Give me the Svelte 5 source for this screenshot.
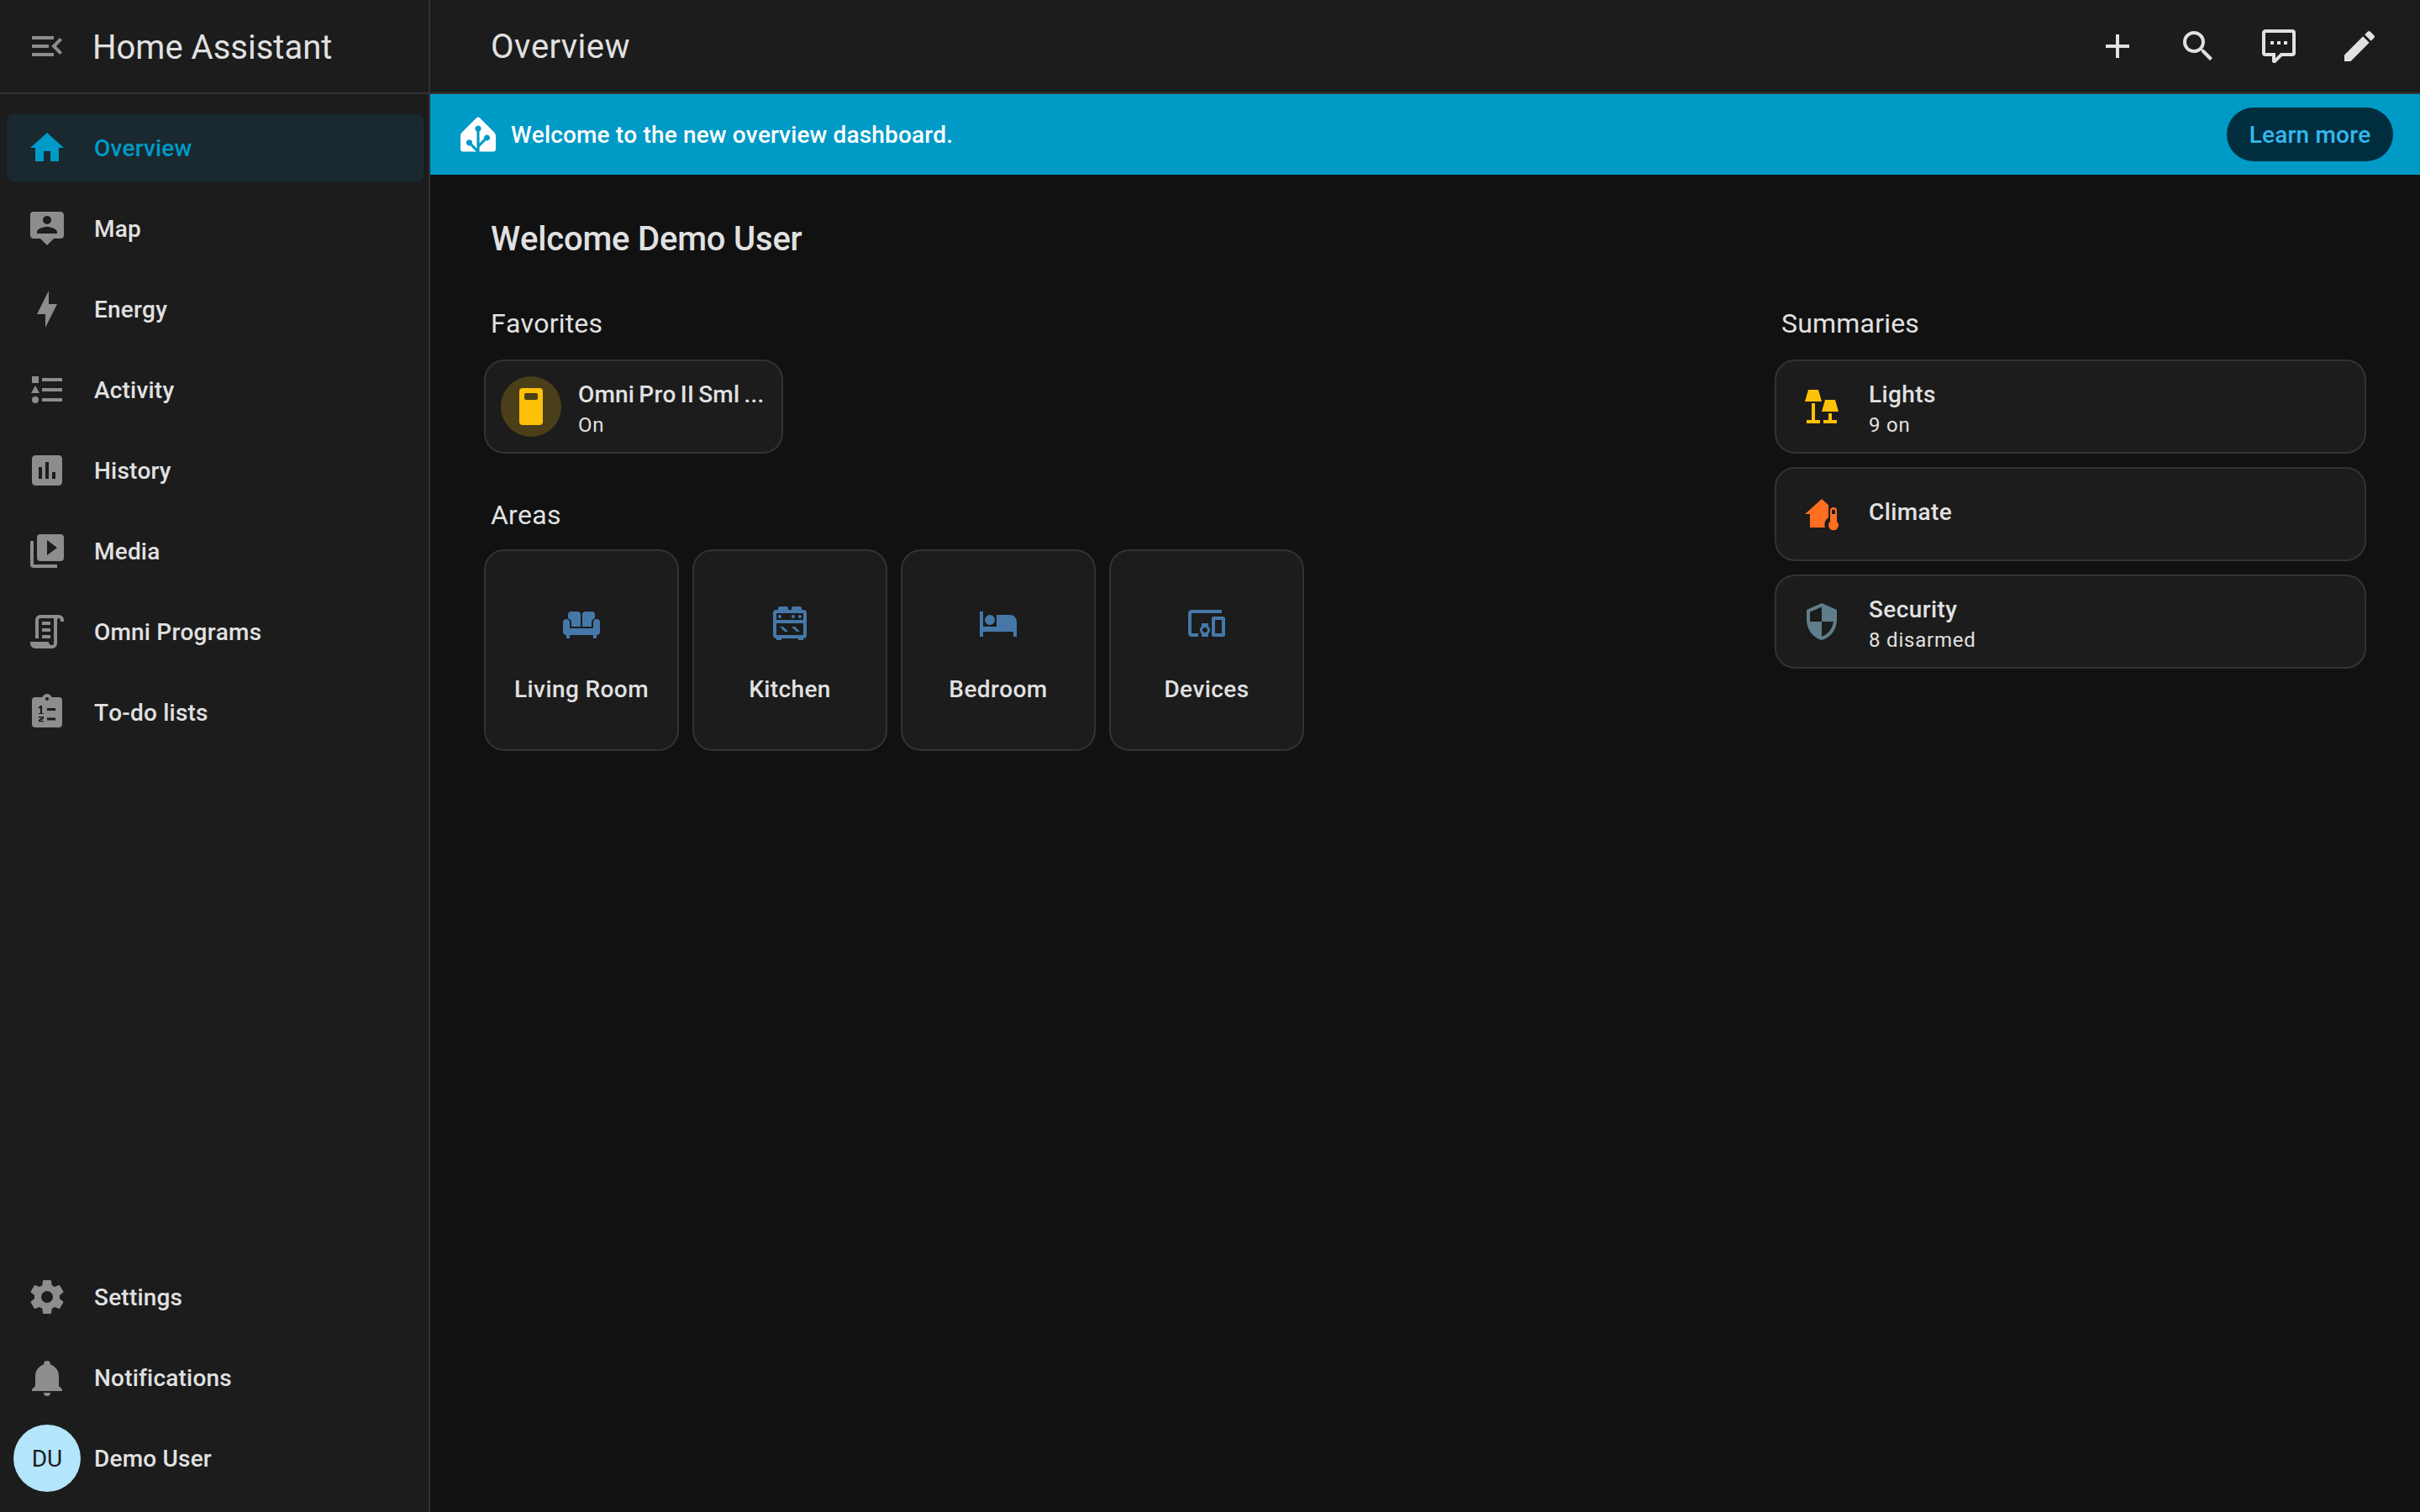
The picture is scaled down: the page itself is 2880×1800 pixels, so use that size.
<script>
	const icons = {
		menuOpen: 'M21,15.61L19.59,17L14.58,12L19.59,7L21,8.39L17.44,12L21,15.61M3,6H16V8H3V6M3,13V11H13V13H3M3,18V16H16V18H3Z',
		home: 'M10,20V14H14V20H19V12H22L12,3L2,12H5V20H10Z',
		map: 'M20,2H4A2,2 0 0,0 2,4V16A2,2 0 0,0 4,18H8L12,22L16,18H20A2,2 0 0,0 22,16V4C22,2.89 21.1,2 20,2M12,4.5A2.5,2.5 0 0,1 14.5,7A2.5,2.5 0 0,1 12,9.5A2.5,2.5 0 0,1 9.5,7A2.5,2.5 0 0,1 12,4.5M18,15H6V14.1C6,12.1 10,11 12,11C14,11 18,12.1 18,14.1V15Z',
		energy: 'M11 15H6L13 1V9H18L11 23V15Z',
		activity: 'M5,9.5L7.5,14H2.5L5,9.5M3,4H7V8H3V4M5,20A2,2 0 0,0 7,18A2,2 0 0,0 5,16A2,2 0 0,0 3,18A2,2 0 0,0 5,20M9,5V7H21V5H9M9,19H21V17H9V19M9,13H21V11H9V13Z',
		history: 'M19 3H5C3.9 3 3 3.9 3 5V19C3 20.1 3.9 21 5 21H19C20.1 21 21 20.1 21 19V5C21 3.9 20.1 3 19 3M9 17H7V10H9V17M13 17H11V7H13V17M17 17H15V13H17V17Z',
		media: 'M4,6H2V20A2,2 0 0,0 4,22H18V20H4V6M20,2H8A2,2 0 0,0 6,4V16A2,2 0 0,0 8,18H20A2,2 0 0,0 22,16V4A2,2 0 0,0 20,2M12,14.5V5.5L18,10L12,14.5Z',
		script: 'M15,20A1,1 0 0,0 16,19V4H8A1,1 0 0,0 7,5V16H5V5A3,3 0 0,1 8,2H19A3,3 0 0,1 22,5V6H20V5A1,1 0 0,0 19,4A1,1 0 0,0 18,5V9L18,19A3,3 0 0,1 15,22H5A3,3 0 0,1 2,19V18H13A2,2 0 0,0 15,20M9,6H14V8H9V6M9,10H14V12H9V10M9,14H14V16H9V14Z',
		todo: 'M19,3H14.82C14.4,1.84 13.3,1 12,1C10.7,1 9.6,1.84 9.18,3H5A2,2 0 0,0 3,5V19A2,2 0 0,0 5,21H19A2,2 0 0,0 21,19V5A2,2 0 0,0 19,3M12,3A1,1 0 0,1 13,4A1,1 0 0,1 12,5A1,1 0 0,1 11,4A1,1 0 0,1 12,3M12,9.5H17V11H12V9.5M12,15.2H17V16.8H12V15.2M6.8,9.2L8,8H9V12.5H10V13H7V12.5H8V9.3L7.2,9.9L6.8,9.2M7,14.5H10V15.8L8,17H10V17.6H7V16.5L9,15.2H7V14.5Z',
		settings: 'M12,15.5A3.5,3.5 0 0,1 8.5,12A3.5,3.5 0 0,1 12,8.5A3.5,3.5 0 0,1 15.5,12A3.5,3.5 0 0,1 12,15.5M19.43,12.97C19.47,12.65 19.5,12.33 19.5,12C19.5,11.67 19.47,11.34 19.43,11L21.54,9.37C21.73,9.22 21.78,8.95 21.66,8.73L19.66,5.27C19.54,5.05 19.27,4.96 19.05,5.05L16.56,6.05C16.04,5.66 15.5,5.32 14.87,5.07L14.5,2.42C14.46,2.18 14.25,2 14,2H10C9.75,2 9.54,2.18 9.5,2.42L9.13,5.07C8.5,5.32 7.96,5.66 7.44,6.05L4.95,5.05C4.73,4.96 4.46,5.05 4.34,5.27L2.34,8.73C2.21,8.95 2.27,9.22 2.46,9.37L4.57,11C4.53,11.34 4.5,11.67 4.5,12C4.5,12.33 4.53,12.65 4.57,12.97L2.46,14.63C2.27,14.78 2.21,15.05 2.34,15.27L4.34,18.73C4.46,18.95 4.73,19.03 4.95,18.95L7.44,17.94C7.96,18.34 8.5,18.68 9.13,18.93L9.5,21.58C9.54,21.82 9.75,22 10,22H14C14.25,22 14.46,21.82 14.5,21.58L14.87,18.93C15.5,18.67 16.04,18.34 16.56,17.94L19.05,18.95C19.27,19.03 19.54,18.95 19.66,18.73L21.66,15.27C21.78,15.05 21.73,14.78 21.54,14.63L19.43,12.97Z',
		bell: 'M21,19V20H3V19L5,17V11C5,7.9 7.03,5.17 10,4.29C10,4.19 10,4.1 10,4A2,2 0 0,1 12,2A2,2 0 0,1 14,4C14,4.1 14,4.19 14,4.29C16.97,5.17 19,7.9 19,11V17L21,19M14,21A2,2 0 0,1 12,23A2,2 0 0,1 10,21',
		plus: 'M19,13H13V19H11V13H5V11H11V5H13V11H19V13Z',
		search: 'M9.5,3A6.5,6.5 0 0,1 16,9.5C16,11.11 15.41,12.59 14.44,13.73L14.71,14H15.5L20.5,19L19,20.5L14,15.5V14.71L13.73,14.44C12.59,15.41 11.11,16 9.5,16A6.5,6.5 0 0,1 3,9.5A6.5,6.5 0 0,1 9.5,3M9.5,5C7,5 5,7 5,9.5C5,12 7,14 9.5,14C12,14 14,12 14,9.5C14,7 12,5 9.5,5Z',
		comment: 'M9,22A1,1 0 0,1 8,21V18H4A2,2 0 0,1 2,16V4C2,2.89 2.9,2 4,2H20A2,2 0 0,1 22,4V16A2,2 0 0,1 20,18H13.9L10.2,21.71C10,21.9 9.75,22 9.5,22V22H9M10,16V19.08L13.08,16H20V4H4V16H10M17,11H15V9H17V11M13,11H11V9H13V11M9,11H7V9H9V11Z',
		pencil: 'M20.71,7.04C21.1,6.65 21.1,6 20.71,5.63L18.37,3.29C18,2.9 17.35,2.9 16.96,3.29L15.12,5.12L18.87,8.87M3,17.25V21H6.75L17.81,9.93L14.06,6.18L3,17.25Z',
		logo: 'M22.939 10.627 13.061.749a1.505 1.505 0 0 0-2.121 0l-9.879 9.878C.478 11.21 0 12.363 0 13.187v9c0 .826.675 1.5 1.5 1.5h9.227l-4.063-4.062a2.034 2.034 0 0 1-.664.113c-1.13 0-2.05-.92-2.05-2.05s.92-2.05 2.05-2.05 2.05.92 2.05 2.05c0 .233-.041.456-.113.665l3.163 3.163V9.928a2.05 2.05 0 0 1-1.15-1.84c0-1.13.92-2.05 2.05-2.05s2.05.92 2.05 2.05a2.05 2.05 0 0 1-1.15 1.84v8.127l3.146-3.146A2.051 2.051 0 0 1 18 12.239c1.13 0 2.05.92 2.05 2.05s-.92 2.05-2.05 2.05a2.02 2.02 0 0 1-.709-.13L12.9 20.602v3.088h9.6c.825 0 1.5-.675 1.5-1.5v-9c0-.825-.477-1.977-1.061-2.561z',
		sofa: 'M6,5H9.5A2,2 0 0,1 11.5,7V14H6V11A3,3 0 0,0 4,9V7A2,2 0 0,1 6,5ZM14.5,5H18A2,2 0 0,1 20,7V9A3,3 0 0,0 18,11V14H12.5V7A2,2 0 0,1 14.5,5ZM3,9.5A2,2 0 0,1 5,11.5V15H19V11.5A2,2 0 0,1 23,11.5V17A2,2 0 0,1 21,19V21H19V19H5V21H3V19A2,2 0 0,1 1,17V11.5A2,2 0 0,1 3,9.5Z',
		stove: 'M6,14H8L11,17H9L6,14M4,4H5V3A1,1 0 0,1 6,2H10A1,1 0 0,1 11,3V4H13V3A1,1 0 0,1 14,2H18A1,1 0 0,1 19,3V4H20A2,2 0 0,1 22,6V19A2,2 0 0,1 20,21V22H17V21H7V22H4V21A2,2 0 0,1 2,19V6A2,2 0 0,1 4,4M18,7A1,1 0 0,1 19,8A1,1 0 0,1 18,9A1,1 0 0,1 17,8A1,1 0 0,1 18,7M14,7A1,1 0 0,1 15,8A1,1 0 0,1 14,9A1,1 0 0,1 13,8A1,1 0 0,1 14,7M20,6H4V10H20V6M4,19H20V12H4V19M6,7A1,1 0 0,1 7,8A1,1 0 0,1 6,9A1,1 0 0,1 5,8A1,1 0 0,1 6,7M13,14H15L18,17H16L13,14Z',
		bed: 'M19,7H11V14H3V5H1V20H3V17H21V20H23V11A4,4 0 0,0 19,7M7,13A3,3 0 0,0 10,10A3,3 0 0,0 7,7A3,3 0 0,0 4,10A3,3 0 0,0 7,13Z',
		devices: 'M3 6H21V4H3C1.9 4 1 4.9 1 6V18C1 19.1 1.9 20 3 20H7V18H3V6M13 12H9V13.78C8.39 14.33 8 15.11 8 16C8 16.89 8.39 17.67 9 18.22V20H13V18.22C13.61 17.67 14 16.88 14 16S13.61 14.33 13 13.78V12M11 17.5C10.17 17.5 9.5 16.83 9.5 16S10.17 14.5 11 14.5 12.5 15.17 12.5 16 11.83 17.5 11 17.5M22 8H16C15.5 8 15 8.5 15 9V19C15 19.5 15.5 20 16 20H22C22.5 20 23 19.5 23 19V9C23 8.5 22.5 8 22 8M21 18H17V10H21V18Z',
		omni: 'M7,1H17A2,2 0 0,1 19,3V21A2,2 0 0,1 17,23H7A2,2 0 0,1 5,21V3A2,2 0 0,1 7,1ZM9,4A1,1 0 0,0 8,5V7A1,1 0 0,0 9,8H15A1,1 0 0,0 16,7V5A1,1 0 0,0 15,4H9Z',
		lamps: 'M4,2H10L12,9H2L4,2ZM6,10H8V20H11V22H3V20H6V10ZM14,8H20L22,15H12L14,8ZM16,16H18V20H21V22H13V20H16V16Z',
		climate: 'M12,3L2,12H5V20H14A5,5 0 0,1 16,14V6.6ZM19,8A2,2 0 0,1 21,10V16.4A3,3 0 1,1 17,16.4V10A2,2 0 0,1 19,8M19,9.2A1,1 0 0,0 18,10.2V12H20V10.2A1,1 0 0,0 19,9.2Z',
		security: 'M12,12H19C18.47,16.11 15.72,19.78 12,20.92V12H5V6.3L12,3.19M12,1L3,5V11C3,16.55 6.84,21.74 12,23C17.16,21.74 21,16.55 21,11V5L12,1Z'
	};

	const nav = [
		{ label: 'Overview', icon: icons.home, active: true },
		{ label: 'Map', icon: icons.map },
		{ label: 'Energy', icon: icons.energy },
		{ label: 'Activity', icon: icons.activity },
		{ label: 'History', icon: icons.history },
		{ label: 'Media', icon: icons.media },
		{ label: 'Omni Programs', icon: icons.script },
		{ label: 'To-do lists', icon: icons.todo }
	];

	const footerNav = [
		{ label: 'Settings', icon: icons.settings },
		{ label: 'Notifications', icon: icons.bell }
	];

	const actions = [icons.plus, icons.search, icons.comment, icons.pencil];

	const areas = [
		{ name: 'Living Room', icon: icons.sofa },
		{ name: 'Kitchen', icon: icons.stove },
		{ name: 'Bedroom', icon: icons.bed },
		{ name: 'Devices', icon: icons.devices }
	];

	const summaries = [
		{ name: 'Lights', state: '9 on', icon: icons.lamps, color: 'yellow' },
		{ name: 'Climate', state: '', icon: icons.climate, color: 'orange' },
		{ name: 'Security', state: '8 disarmed', icon: icons.security, color: 'slate' }
	];
</script>

<div class="shell">
	<aside class="sidebar">
		<div class="sidebar-head">
			<svg class="icon muted" viewBox="0 0 24 24"><path d={icons.menuOpen} /></svg>
			<span class="brand">Home Assistant</span>
		</div>
		<nav class="nav">
			{#each nav as item}
				<div class="nav-item" class:active={item.active}>
					<svg class="icon" viewBox="0 0 24 24"><path d={item.icon} /></svg>
					<span>{item.label}</span>
				</div>
			{/each}
		</nav>
		<div class="nav nav-bottom">
			{#each footerNav as item}
				<div class="nav-item">
					<svg class="icon" viewBox="0 0 24 24"><path d={item.icon} /></svg>
					<span>{item.label}</span>
				</div>
			{/each}
			<div class="nav-item user">
				<div class="avatar">DU</div>
				<span>Demo User</span>
			</div>
		</div>
	</aside>

	<main class="main">
		<header class="topbar">
			<span class="page-title">Overview</span>
			<div class="actions">
				{#each actions as action}
					<button class="action">
						<svg class="icon" viewBox="0 0 24 24"><path d={action} /></svg>
					</button>
				{/each}
			</div>
		</header>

		<div class="banner">
			<svg class="logo" viewBox="0 0 24 24"><path d={icons.logo} /></svg>
			<span class="banner-text">Welcome to the new overview dashboard.</span>
			<button class="learn">Learn more</button>
		</div>

		<div class="content">
			<h1>Welcome Demo User</h1>
			<div class="columns">
				<div class="col">
					<h2>Favorites</h2>
					<div class="tile favorite">
						<div class="badge">
							<svg class="icon yellow" viewBox="0 0 24 24"><path fill-rule="evenodd" d={icons.omni} /></svg>
						</div>
						<div class="tile-text two-line">
							<div class="tile-name tight">Omni Pro II Sml ...</div>
							<div class="tile-state">On</div>
						</div>
					</div>

					<h2 class="areas-title">Areas</h2>
					<div class="areas">
						{#each areas as area}
							<div class="area">
								<svg class="icon area-icon" viewBox="0 0 24 24"><path d={area.icon} /></svg>
								<span>{area.name}</span>
							</div>
						{/each}
					</div>
				</div>

				<div class="col summaries">
					<h2>Summaries</h2>
					<div class="summary-list">
						{#each summaries as s}
							<div class="tile summary">
								<svg class="icon {s.color}" viewBox="0 0 24 24"><path d={s.icon} /></svg>
								<div class="tile-text" class:two-line={s.state} class:one-line={!s.state}>
									<div class="tile-name">{s.name}</div>
									{#if s.state}
										<div class="tile-state">{s.state}</div>
									{/if}
								</div>
							</div>
						{/each}
					</div>
				</div>
			</div>
		</div>
	</main>
</div>

<style>
	:global(body) {
		margin: 0;
		background: #111111;
	}

	.shell {
		display: flex;
		height: 1800px;
		overflow: hidden;
		font-family: Roboto, 'Noto Sans', sans-serif;
		font-kerning: none;
		color: #e1e1e1;
		background: #111111;
	}

	.icon {
		display: block;
		flex: none;
		width: 48px;
		height: 48px;
		fill: currentColor;
	}

	.sidebar {
		display: flex;
		flex-direction: column;
		flex: none;
		box-sizing: border-box;
		width: 512px;
		background: #1c1c1c;
		border-right: 2px solid #333333;
	}

	.sidebar-head {
		display: flex;
		align-items: center;
		flex: none;
		box-sizing: border-box;
		height: 112px;
		padding-left: 32px;
		gap: 30px;
		border-bottom: 2px solid #333333;
	}

	.muted {
		color: #8d8d8d;
	}

	.brand {
		padding-top: 2px;
		font-size: 40px;
		font-weight: 400;
	}

	.nav {
		display: flex;
		flex-direction: column;
		gap: 16px;
		padding: 24px 6px 0 8px;
	}

	.nav-bottom {
		margin-top: auto;
		padding-top: 0;
		padding-bottom: 24px;
	}

	.nav-item {
		display: flex;
		align-items: center;
		height: 80px;
		padding-left: 24px;
		gap: 32px;
		border-radius: 8px;
		font-size: 28px;
		font-weight: 500;
		letter-spacing: 0.2px;
		color: #e1e1e1;
	}

	.nav-item .icon {
		color: #8d8d8d;
	}

	.nav-item.active {
		background: #19292f;
		color: #009ac7;
	}

	.nav-item.active .icon {
		color: #009ac7;
	}

	.nav-item.user {
		padding-left: 8px;
		gap: 16px;
	}

	.avatar {
		display: flex;
		align-items: center;
		justify-content: center;
		flex: none;
		width: 80px;
		height: 80px;
		border-radius: 50%;
		background: #b3e5fc;
		color: #1c1c1c;
		font-size: 28px;
		font-weight: 400;
		letter-spacing: 0;
	}

	.main {
		display: flex;
		flex-direction: column;
		flex: 1;
		min-width: 0;
	}

	.topbar {
		display: flex;
		align-items: center;
		justify-content: space-between;
		flex: none;
		box-sizing: border-box;
		height: 112px;
		padding: 0 24px 0 72px;
		background: #1c1c1c;
		border-bottom: 2px solid #333333;
	}

	.page-title {
		padding-top: 1px;
		font-size: 40px;
		font-weight: 400;
		letter-spacing: 0.5px;
	}

	.actions {
		display: flex;
	}

	.action {
		display: flex;
		align-items: center;
		justify-content: center;
		width: 96px;
		height: 96px;
		padding: 0;
		border: none;
		background: none;
		color: #e1e1e1;
	}

	.banner {
		display: flex;
		align-items: center;
		flex: none;
		box-sizing: border-box;
		height: 96px;
		padding: 0 32px 0 36px;
		background: #009ac7;
		color: #ffffff;
	}

	.logo {
		display: block;
		flex: none;
		width: 42px;
		height: 42px;
		fill: #ffffff;
	}

	.banner-text {
		flex: 1;
		margin-left: 18px;
		font-size: 28px;
		font-weight: 500;
		letter-spacing: 0.15px;
	}

	.learn {
		flex: none;
		height: 64px;
		padding: 0 26.5px;
		border: none;
		border-radius: 32px;
		background: #002e3e;
		color: #33b9f0;
		font: inherit;
		font-size: 28px;
		font-weight: 500;
		letter-spacing: 0.2px;
	}

	.content {
		padding: 49px 64px 0;
	}

	h1 {
		margin: 0 0 48px 8px;
		font-size: 40px;
		line-height: 56px;
		font-weight: 500;
		letter-spacing: -0.2px;
		color: #e1e1e1;
	}

	h2 {
		margin: 0 0 19px 8px;
		font-size: 32px;
		line-height: 48px;
		font-weight: 400;
		letter-spacing: 0.2px;
		color: #e1e1e1;
	}

	.areas-title {
		margin-top: 49px;
		margin-bottom: 17px;
	}

	.columns {
		display: grid;
		grid-template-columns: 1fr 704px;
	}

	.tile {
		display: flex;
		align-items: center;
		box-sizing: border-box;
		height: 112px;
		background: #1c1c1c;
		border: 2px solid #333333;
		border-radius: 24px;
	}

	.favorite {
		width: 356px;
		padding: 0 18px;
		gap: 20px;
	}

	.badge {
		display: flex;
		align-items: center;
		justify-content: center;
		flex: none;
		width: 72px;
		height: 72px;
		border-radius: 50%;
		background: #4a3f19;
	}

	.yellow {
		color: #ffc107;
	}

	.orange {
		color: #ff6f22;
	}

	.slate {
		color: #607d8b;
	}

	.tile-text {
		min-width: 0;
		flex: 1;
	}

	.two-line {
		padding-top: 4px;
	}

	.one-line {
		padding-bottom: 4px;
	}

	.tile-name {
		font-size: 28px;
		line-height: 40px;
		font-weight: 500;
		letter-spacing: 0.4px;
		white-space: nowrap;
	}

	.tile-name.tight {
		letter-spacing: 0.2px;
		word-spacing: -2px;
	}

	.tile-state {
		font-size: 24px;
		line-height: 32px;
		font-weight: 400;
		letter-spacing: 0.8px;
		color: #e1e1e1;
	}

	.summary {
		padding: 0 30px;
		gap: 32px;
	}

	.summary-list {
		display: flex;
		flex-direction: column;
		gap: 16px;
	}

	.areas {
		display: flex;
		gap: 16px;
	}

	.area {
		display: flex;
		flex-direction: column;
		align-items: center;
		box-sizing: border-box;
		width: 232px;
		height: 240px;
		padding-top: 62px;
		gap: 33px;
		background: #1c1c1c;
		border: 2px solid #333333;
		border-radius: 24px;
		font-size: 28px;
		line-height: 44px;
		font-weight: 500;
		letter-spacing: 0.4px;
	}

	.area-icon {
		color: #4578a8;
	}
</style>
